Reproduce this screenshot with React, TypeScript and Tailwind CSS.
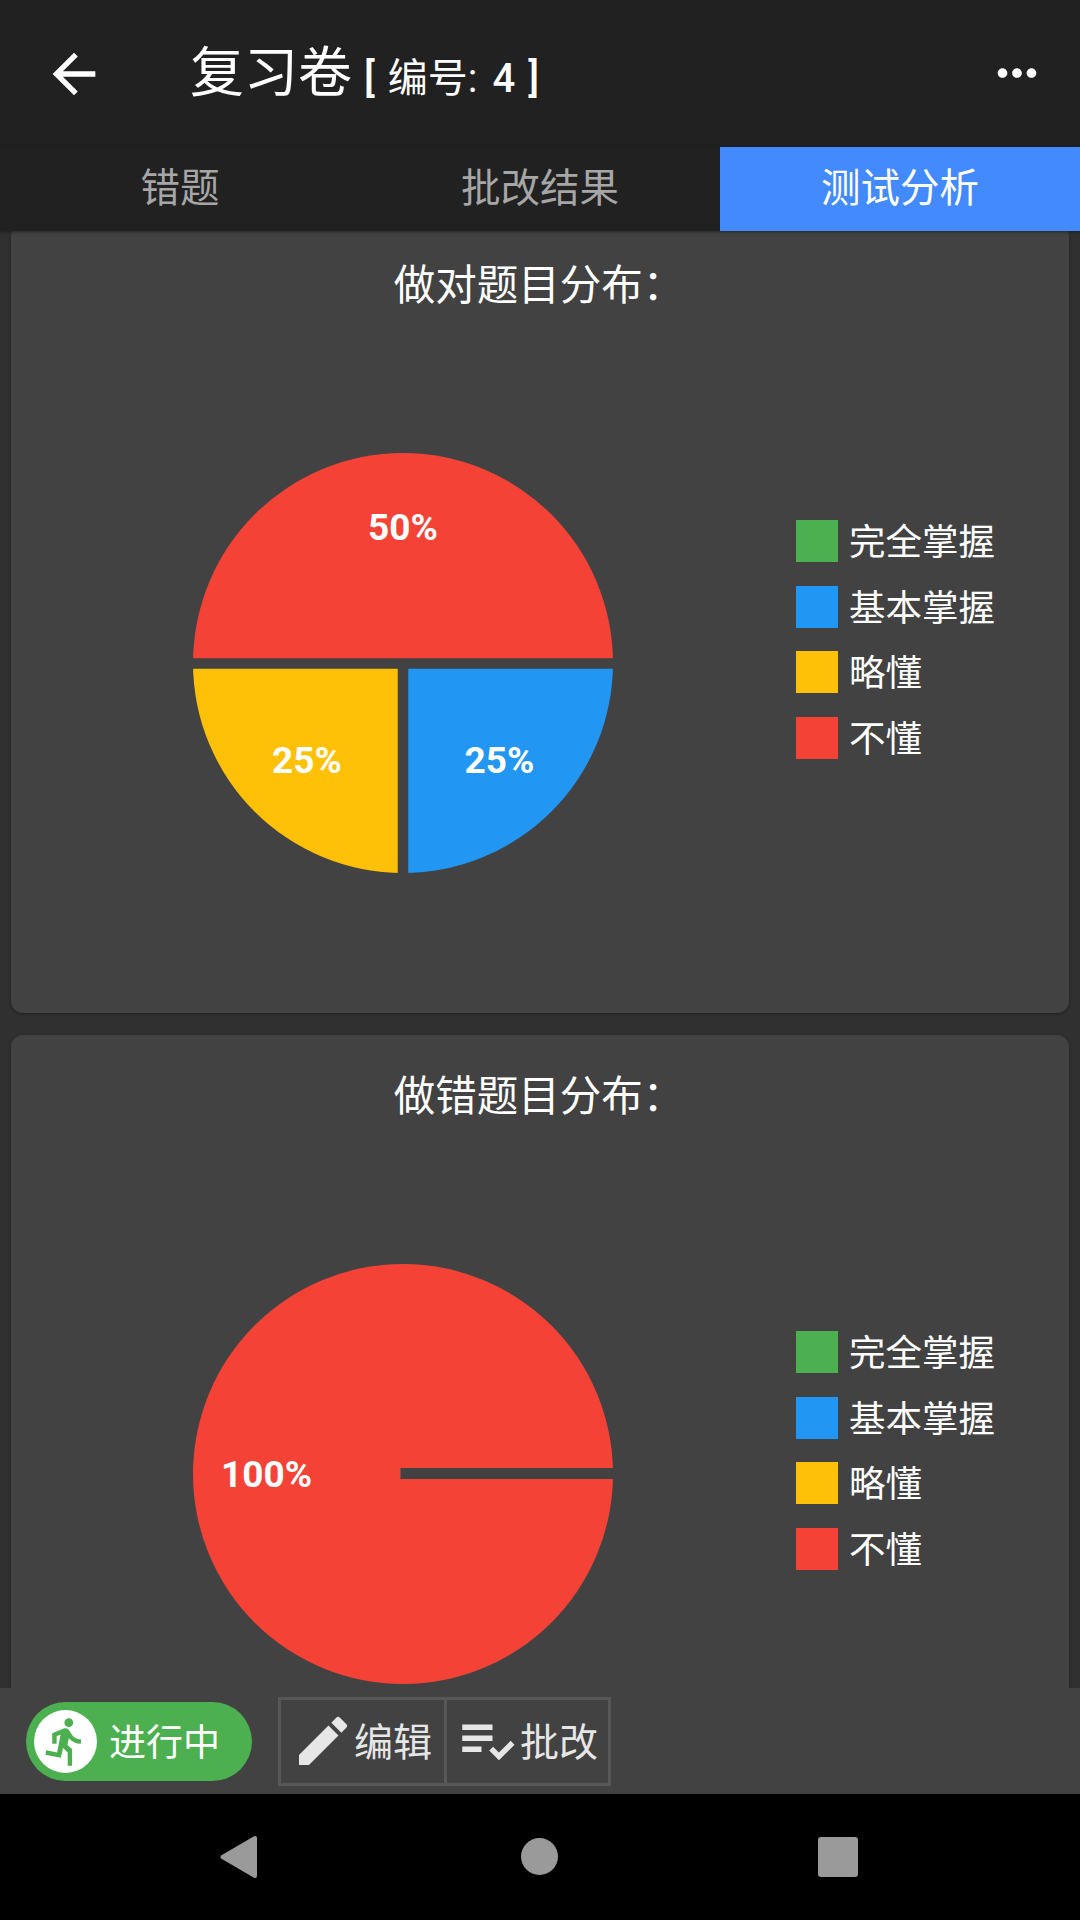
import type { ReactNode } from "react";
import { MdArrowBack, MdDirectionsRun, MdEdit, MdMoreHoriz, MdPlaylistAddCheck } from "react-icons/md";

const FONT = 'font-["Roboto","Noto_Sans_CJK_SC",sans-serif]';

const LEGEND = [
  { label: "完全掌握", color: "bg-[#4caf50]" },
  { label: "基本掌握", color: "bg-[#2196f3]" },
  { label: "略懂", color: "bg-[#ffc107]" },
  { label: "不懂", color: "bg-[#f44336]" },
];

function PieLabel({ x, y, children }: { x: number; y: number; children: string }) {
  return (
    <text x={x} y={y} textAnchor="middle" fill="#fff" fontSize="37" fontWeight="700" fontFamily="Roboto, sans-serif">
      {children}
    </text>
  );
}

function MixedPie() {
  return (
    <svg width="420" height="420" viewBox="0 0 420 420" className="shrink-0">
      <path d="M0 210A210 210 0 0 1 420 210Z" fill="#f44336" />
      <path d="M210 210H420A210 210 0 0 1 210 420Z" fill="#2196f3" />
      <path d="M210 210V420A210 210 0 0 1 0 210Z" fill="#ffc107" />
      <path d="M0 210.5H420M210 210V420" stroke="#424242" strokeWidth="10.5" />
      <PieLabel x={210} y={87}>50%</PieLabel>
      <PieLabel x={114} y={320}>25%</PieLabel>
      <PieLabel x={306.5} y={320}>25%</PieLabel>
    </svg>
  );
}

function FullPie() {
  return (
    <svg width="420" height="420" viewBox="0 0 420 420" className="shrink-0">
      <circle cx="210" cy="210" r="210" fill="#f44336" />
      <path d="M207.5 209.5H420" stroke="#424242" strokeWidth="11" />
      <PieLabel x={73.5} y={223}>100%</PieLabel>
    </svg>
  );
}

function ChartCard({ title, className, children }: { title: string; className?: string; children: ReactNode }) {
  return (
    <section className={`h-[789px] shrink-0 rounded-[12px] bg-[#424242] shadow-[0_1px_3px_rgba(0,0,0,0.35)] ${className ?? ""}`}>
      <h2 className="flex h-[125px] items-center justify-center pr-[2px] text-[41.5px] font-normal text-white">{title}</h2>
      <div className="mt-[104px] flex items-start pl-[182px]">
        {children}
        <ul className="ml-[183px] mt-[67px] flex flex-col gap-[23.5px]">
          {LEGEND.map((item) => (
            <li key={item.label} className="flex h-[42px] items-center gap-[11px] text-[36.5px] text-white">
              <span className={`h-[42px] w-[42px] shrink-0 ${item.color}`} />
              <span className="whitespace-nowrap pt-[5px]">{item.label}</span>
            </li>
          ))}
        </ul>
      </div>
    </section>
  );
}

export default function App() {
  return (
    <div className={`flex h-[1920px] w-[1080px] flex-col overflow-hidden bg-[#303030] ${FONT}`}>
      <header className="relative z-10 h-[147px] shrink-0 bg-[#212121] text-white">
        <div className="flex h-full items-center pl-[42px] pr-[34px]">
          <MdArrowBack size={64} className="shrink-0" />
          <h1 className="ml-[84px] flex items-baseline text-[54px] font-normal">
            复习卷
            <span className="ml-[12px] text-[40px]">
              <b className="font-medium">[</b>
              <span className="ml-[13px]">编号:</span>
              <b className="ml-[15px] font-medium">4</b>
              <b className="ml-[13px] font-medium">]</b>
            </span>
          </h1>
          <MdMoreHoriz size={58} className="-mt-[2px] ml-auto shrink-0" />
        </div>
      </header>

      <nav className="relative z-10 grid h-[84px] shrink-0 grid-cols-3 bg-[#212121] text-[39.5px] shadow-[0_1px_3px_rgba(0,0,0,0.4)]">
        <div className="flex items-center justify-center text-[#a6a6a6]">错题</div>
        <div className="flex items-center justify-center text-[#a6a6a6]">批改结果</div>
        <div className="flex items-center justify-center bg-[#448aff] text-white">测试分析</div>
      </nav>

      <main className="flex min-h-0 flex-1 flex-col gap-[22px] overflow-hidden px-[11px]">
        <ChartCard title="做对题目分布：" className="-mt-[7px]">
          <MixedPie />
        </ChartCard>
        <ChartCard title="做错题目分布：">
          <FullPie />
        </ChartCard>
      </main>

      <footer className="flex h-[106px] shrink-0 items-center bg-[#424242] pl-[26px] text-[#e6e6e6]">
        <div className="flex h-[79px] w-[226px] items-center rounded-full bg-[#4caf50] pl-[8px] text-[37px] text-white">
          <span className="flex h-[63px] w-[63px] items-center justify-center rounded-full bg-white text-[#4caf50]">
            <MdDirectionsRun size={53} />
          </span>
          <span className="ml-[12px] pt-[5px]">进行中</span>
        </div>
        <div className="ml-[26px] flex h-[89px] border-[3px] border-[#575757] text-[39px]">
          <button className="flex w-[163px] items-center pl-[10px]">
            <MdEdit size={64} className="shrink-0" />
            <span className="-ml-[1px] whitespace-nowrap pt-[5px]">编辑</span>
          </button>
          <button className="flex w-[164px] items-center border-l-[3px] border-[#575757] pl-[7px]">
            <MdPlaylistAddCheck size={66} className="shrink-0" />
            <span className="whitespace-nowrap pt-[5px]">批改</span>
          </button>
        </div>
      </footer>

      <div className="h-[126px] shrink-0 bg-black">
        <svg width="1080" height="126" viewBox="0 0 1080 126" className="block" fill="#9a9a9a">
          <path d="M222.5 63L255 44V82Z" stroke="#9a9a9a" strokeWidth="4" strokeLinejoin="round" />
          <circle cx="539.5" cy="62.5" r="18.5" />
          <rect x="818" y="43" width="40" height="40" rx="3" />
        </svg>
      </div>
    </div>
  );
}
